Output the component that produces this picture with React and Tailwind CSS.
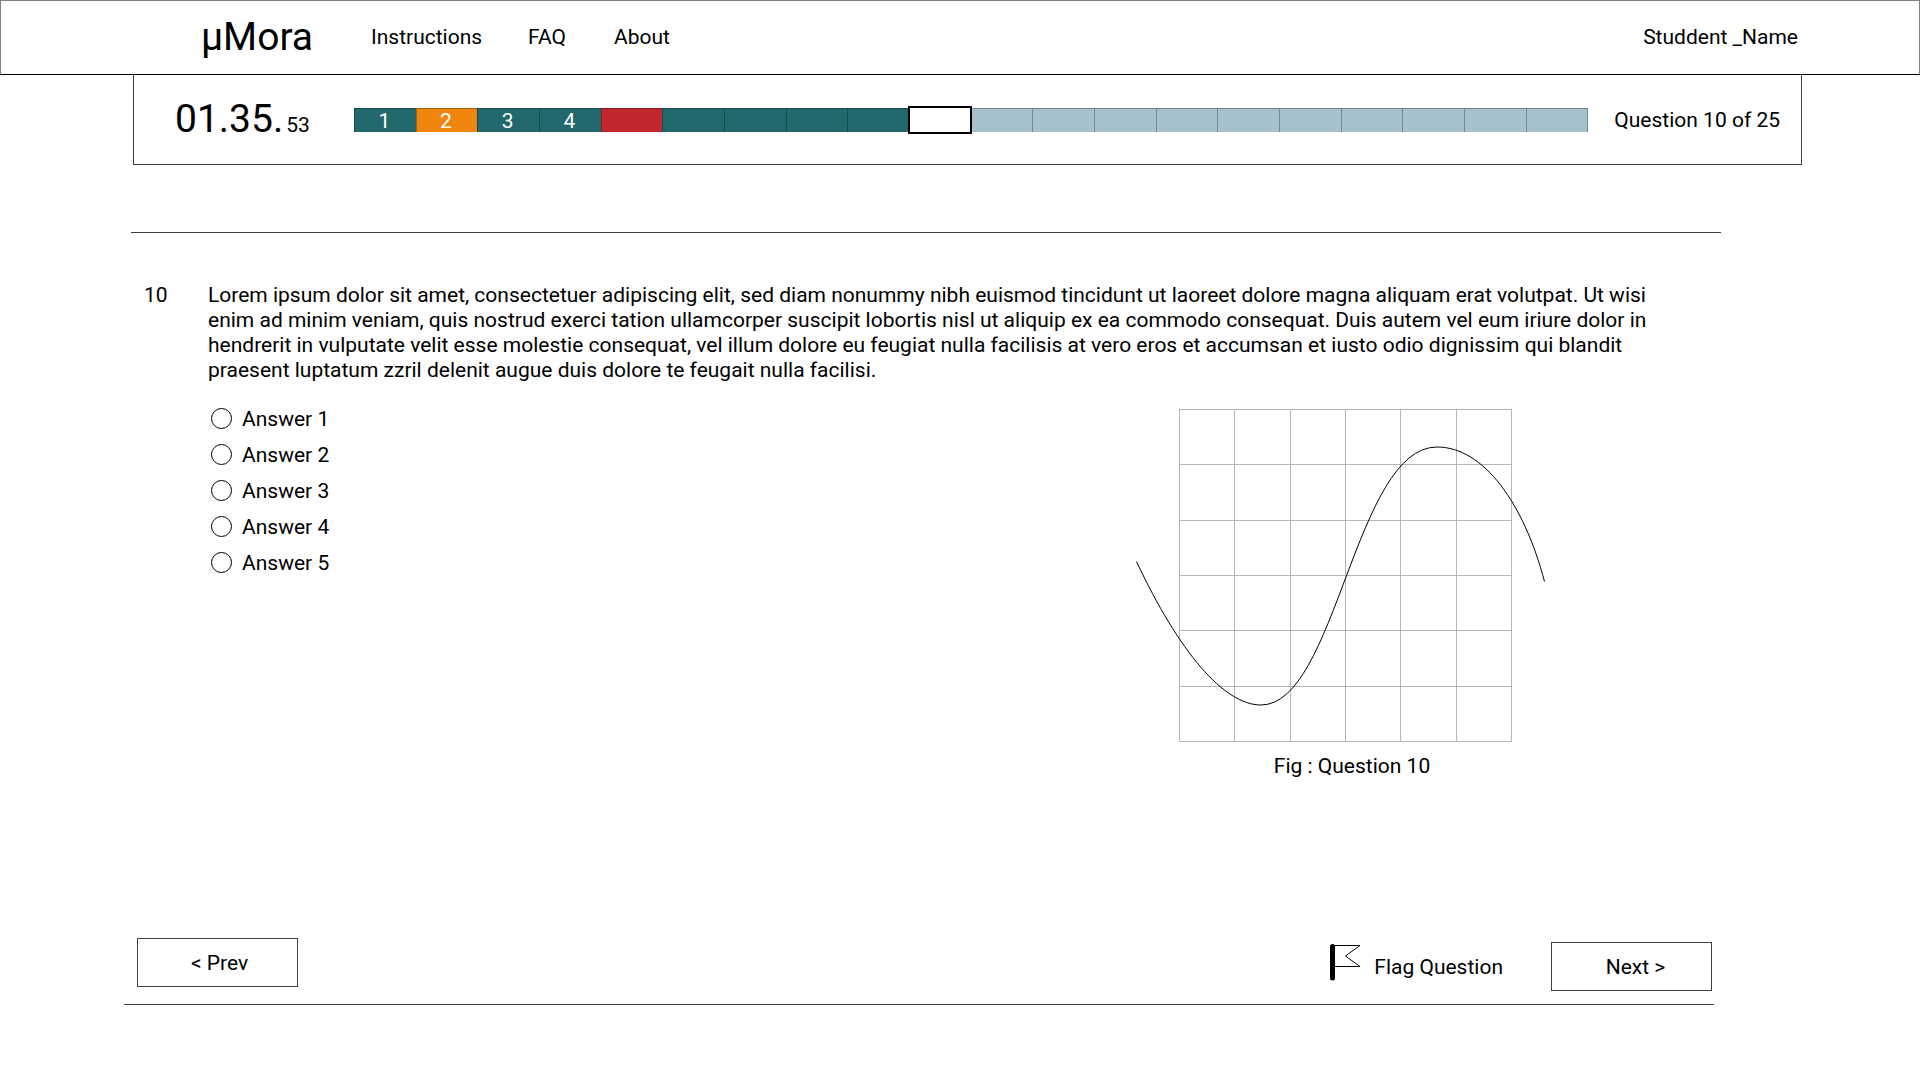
import React from "react";

const NAV = [
  { label: "Instructions", gap: "mr-[46px]" },
  { label: "FAQ", gap: "mr-12" },
  { label: "About", gap: "" },
];

const DONE = "border-black/30 bg-[#22696d]";
const FLAGGED = "border-black/30 bg-[#f0860f]";
const SKIPPED = "border-black/30 bg-[#c1272d]";
const CURRENT = "z-10 -my-px outline-2 -outline-offset-1 outline-black border-black bg-white";
const TODO = "border-black/30 bg-[#a5c2cc]";

const STEPS = [
  { text: "1", tone: DONE },
  { text: "2", tone: FLAGGED },
  { text: "3", tone: DONE },
  { text: "4", tone: DONE },
  { text: "", tone: SKIPPED },
  { text: "", tone: DONE },
  { text: "", tone: DONE },
  { text: "", tone: DONE },
  { text: "", tone: DONE },
  { text: "", tone: CURRENT },
  ...Array.from({ length: 10 }, () => ({ text: "", tone: TODO })),
];

const ANSWERS = ["Answer 1", "Answer 2", "Answer 3", "Answer 4", "Answer 5"];

const GRID_X = [43, 98, 154, 209, 264, 320, 375];
const GRID_Y = [3, 58, 114, 169, 224, 280, 335];

function Header() {
  return (
    <header className="flex h-[75px] items-center border border-[#808080] border-b-black pr-[121px] pb-px pl-[200px]">
      <span className="w-[170px] text-[39px] leading-none">µMora</span>
      <nav className="flex flex-1 items-center">
        {NAV.map((item) => (
          <a key={item.label} href="#" className={item.gap}>
            {item.label}
          </a>
        ))}
      </nav>
      <span>Studdent _Name</span>
    </header>
  );
}

function ProgressPanel() {
  return (
    <section className="mr-[118px] ml-[133px] flex h-[90px] items-start border border-t-0 border-[#404040] pr-[21px] pl-[41px]">
      <div className="mt-[25px] flex w-[179px] items-baseline leading-none">
        <span className="text-[39px] leading-none">01.35.</span>
        <span className="ml-[3px]">53</span>
      </div>
      <ol className="mt-[33px] flex h-6 flex-1 text-white">
        {STEPS.map((step, i) => (
          <li
            key={i}
            className={`relative flex flex-1 items-center justify-center border-t border-l pt-px pr-[2px] last:border-r ${step.tone}`}
          >
            {step.text}
          </li>
        ))}
      </ol>
      <span className="mt-[33px] ml-[26px]">Question 10 of 25</span>
    </section>
  );
}

function Figure() {
  return (
    <figure className="mt-[11px] mr-[173px] w-[412px]">
      <svg viewBox="0 0 412 340" className="block w-full" fill="none" role="img" aria-label="Curve on a grid">
        <g stroke="#b5b5b5" shapeRendering="crispEdges">
          {GRID_X.map((x) => (
            <path key={x} d={`M${x + 0.5} 3V336`} />
          ))}
          {GRID_Y.map((y) => (
            <path key={y} d={`M43 ${y + 0.5}H376`} />
          ))}
        </g>
        <path
          d="M0.5 155.5C43 246 88 299 125 299C200 299 219 41 301 41C348 41 388 98 408.500 175.500"
          stroke="#000"
        />
      </svg>
      <figcaption className="mt-2 pl-5 text-center">Fig : Question 10</figcaption>
    </figure>
  );
}

function Question() {
  return (
    <main className="mr-[199px] ml-[131px] border-t border-[#404040] pt-[50px]">
      <div className="flex pl-[13px] leading-[25px]">
        <span className="w-16">10</span>
        <p className="max-w-[1480px] flex-1">
          Lorem ipsum dolor sit amet, consectetuer adipiscing elit, sed diam nonummy nibh euismod
          tincidunt ut laoreet dolore magna aliquam erat volutpat. Ut wisi enim ad minim veniam, quis
          nostrud exerci tation ullamcorper suscipit lobortis nisl ut aliquip ex ea commodo consequat.
          Duis autem vel eum iriure dolor in hendrerit in vulputate velit esse molestie consequat, vel
          illum dolore eu feugiat nulla facilisis at vero eros et accumsan et iusto odio dignissim qui
          blandit praesent luptatum zzril delenit augue duis dolore te feugait nulla facilisi.
        </p>
      </div>
      <div className="mt-3 flex items-start justify-between pl-20">
        <fieldset aria-label="Answers" className="mt-[5px]">
          {ANSWERS.map((answer) => (
            <label key={answer} className="flex h-9 items-center gap-[10px]">
              <input
                type="radio"
                name="answer"
                className="size-[21px] appearance-none rounded-full border border-black checked:bg-[#22696d]"
              />
              <span className="pt-px">{answer}</span>
            </label>
          ))}
        </fieldset>
        <Figure />
      </div>
    </main>
  );
}

function Footer() {
  return (
    <footer className="mt-40 mr-[206px] ml-[124px] flex items-start border-b border-[#404040] pr-[2px] pb-[13px] pl-[13px]">
      <button type="button" className="mb-1 h-[49px] w-[161px] border border-[#404040] pl-1">
        &lt; Prev
      </button>
      <button type="button" className="mt-1 ml-auto flex h-[49px] items-center">
        <svg viewBox="0 0 34 38" className="mt-px mr-[10px] h-[38px] w-[34px] self-start" fill="none">
          <path d="M2.500 2.500H30L15.500 13L30 23.500H2.500" stroke="#000" />
          <path d="M2.500 3.500V35" stroke="#000" strokeWidth="5" strokeLinecap="round" />
        </svg>
        Flag Question
      </button>
      <button type="button" className="mt-1 ml-12 h-[49px] w-[161px] border border-[#404040] pl-2">
        Next &gt;
      </button>
    </footer>
  );
}

export default function App() {
  return (
    <div className="min-h-screen bg-white font-['Roboto',sans-serif] text-[21px] leading-6 text-black">
      <Header />
      <ProgressPanel />
      <div className="h-[67px]" />
      <Question />
      <Footer />
    </div>
  );
}
